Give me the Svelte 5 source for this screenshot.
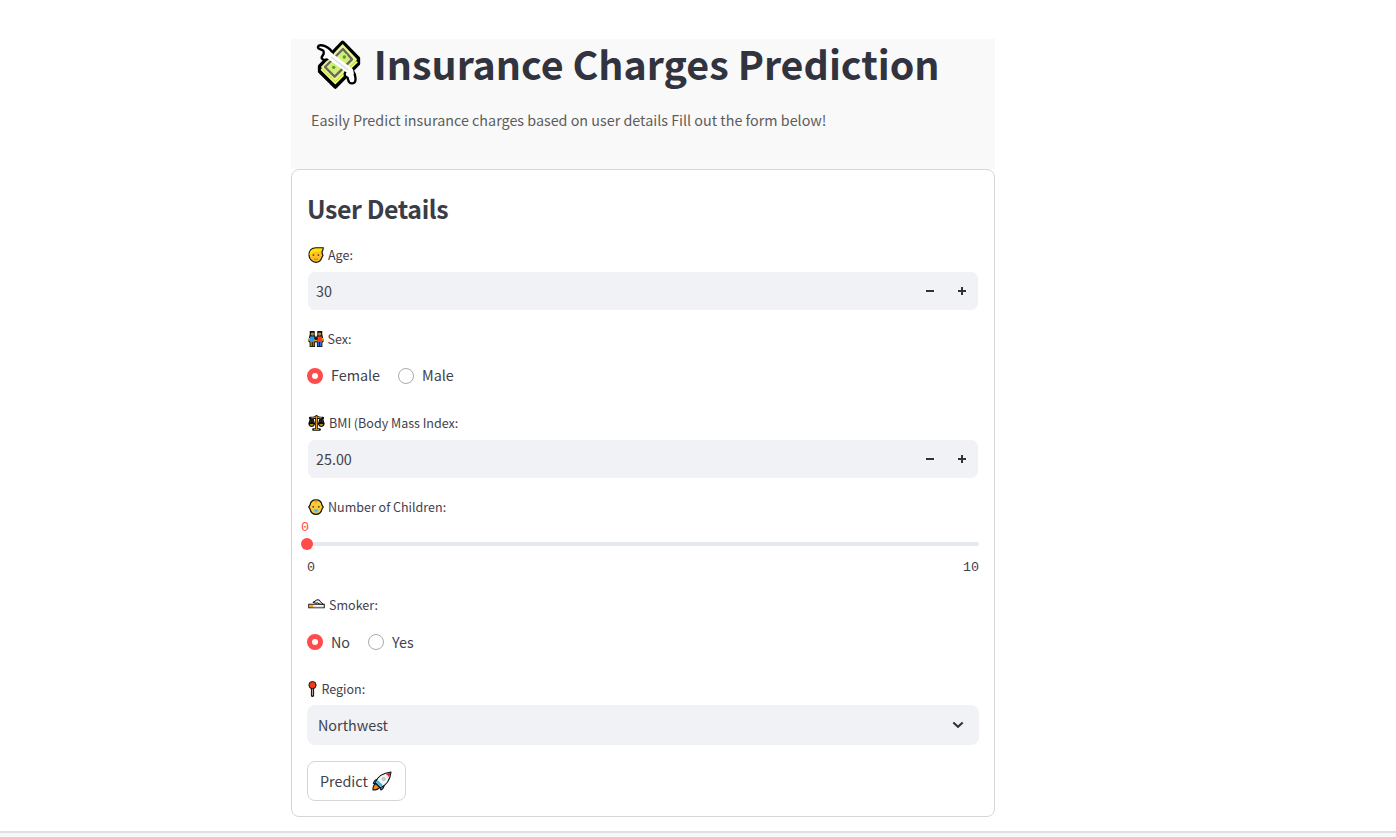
<script>
  let age = $state(30);
  let bmi = $state(25);
  let sex = $state('Female');
  let smoker = $state('No');
</script>

{#snippet stepper(down, up)}
  <button type="button" class="step" aria-label="Decrease" onclick={down}>
    <svg width="8" height="8" viewBox="0 0 8 8"><path d="M0 3h8v2H0z" fill="#31333f" /></svg>
  </button>
  <button type="button" class="step" aria-label="Increase" onclick={up}>
    <svg width="8" height="8" viewBox="0 0 8 8"><path d="M0 3h3V0h2v3h3v2H5v3H3V5H0z" fill="#31333f" /></svg>
  </button>
{/snippet}

{#snippet radios(options, value, pick, kind)}
  <div class="radios {kind}">
    {#each options as option}
      <button type="button" class="radio" onclick={() => pick(option)}>
        <span class="dot" class:on={value === option}></span><span class="text">{option}</span>
      </button>
    {/each}
  </div>
{/snippet}

<main>
  <header>
    <h1>
      <svg width="45" height="50" viewBox="93 30 135 150" stroke-linejoin="round">
        <path d="M173 37 L220 85 V101 L151 171 L104 124 V109 Z" fill="#c3df48" stroke="#000" stroke-width="11" />
        <path d="M173 42 L216 88 L151 153 L108 111 Z" fill="#e9f58d" />
        <path d="M108 118 L151 160 L217 95" fill="none" stroke="#f1ff72" stroke-width="4" />
        <path d="M174 57 L201 88 L149 140 L120 111 Z" fill="#d9ed7c" stroke="#67695f" stroke-width="7" />
        <circle cx="178" cy="81" r="10" fill="#c5f178" /><circle cx="146" cy="112" r="10" fill="#c5f178" />
        <circle cx="178" cy="81" r="5" fill="#5f9a22" /><circle cx="146" cy="112" r="5" fill="#5f9a22" />
        <path d="M144 75 C138 47 101 40 99 50 C97 60 112 56 116 64 C120 75 103 82 113 88 C120 92 129 87 135 83" fill="#fff" stroke="#000" stroke-width="7" />
        <path d="M183 124 C175 133 180 142 187 142 C191 148 187 160 201 160 C217 161 213 134 202 119" fill="#fff" stroke="#000" stroke-width="7" />
        <path d="M122 60 L137 66 L204 118 L207 133 L186 128 L125 84 Z" fill="#fff" />
        <path d="M138 81 L190 120" stroke="#ddd" stroke-width="4" />
      </svg>
      <span>Insurance Charges Prediction</span>
    </h1>
    <p>Easily Predict insurance charges based on user details Fill out the form below!</p>
  </header>

  <form>
    <h2>User Details</h2>

    <section>
      <div class="label">
        <svg width="16" height="16" viewBox="0 0 16 16">
          <path d="M1 8.3 C1 3.3 3.5 .8 8 .8 H15.2 C15.3 2.6 14.6 3.8 14 4.6 L14.4 7.2 15 8.2 14 10.2 C13 13.5 11 15.3 8 15.3 S1 12.5 1 8.3Z" fill="#ffbf28" stroke="#15130c" stroke-width="1.2" />
          <path d="M1.6 8 V6.2 C2.2 3 4.6 1.4 8 1.4 H14.6 C14.2 4 12 4.8 8.5 4.8 C5 4.8 3.2 5.5 3 8Z" fill="#ffe400" />
          <path d="M5.4 7.2v1.8M10.4 7.2v1.8" stroke="#65451a" stroke-width="1.4" /><path d="M5.9 12q2 .7 4 0" fill="none" stroke="#b87716" />
        </svg>
        <span>Age:</span>
      </div>
      <div class="field"><span>{age}</span>{@render stepper(() => age--, () => age++)}</div>
    </section>

    <section>
      <div class="label sex">
        <svg width="16" height="16" viewBox="0 0 16 16">
          <path d="M1.4 4.6h5.6L8 6.5l1-1.9h5.6L15.9 10.2l-1.5 1.4V16H8.9v-4.2L8 11l-.9.8V16H1.6v-4.4L.1 10.2Z" fill="#111" />
          <path d="M1.7 0h5v5h-5ZM9.3 0h5v5h-5Z" fill="#111" />
          <path d="M2.1 5.5h4.2l.4 5.5H2Z" fill="#2a9cf0" /><path d="M9.7 5.5h4.2l.3 5.5H9.3Z" fill="#fa3b20" />
          <path d="M2.4 11h1.7v4.3H2.4ZM4.8 11h1.5v4.3H4.8Z" fill="#a06c1b" /><path d="M9.7 11h1.5v4.3H9.7ZM12 11h1.6v4.3H12Z" fill="#2b70d8" />
          <circle cx="4.4" cy="3.1" r="1.7" fill="#b98230" /><circle cx="11.6" cy="3.1" r="1.7" fill="#b98230" />
          <path d="M1.5 7 1 10M6.2 9.3l3 .3M14.6 7l.4 3" stroke="#eeb42d" stroke-width="1.3" />
        </svg>
        <span>Sex:</span>
      </div>
      {@render radios(['Female', 'Male'], sex, (v) => (sex = v), 'raised')}
    </section>

    <section>
      <div class="label">
        <svg width="17" height="16" viewBox="0 0 17 16">
          <path d="M8.5 1.3v13M2.2 3h3.3l3-1.2 3 1.2h3.3M5.4 14.5h6.2" fill="none" stroke="#090909" stroke-width="2.6" stroke-linecap="round" />
          <path d="M2.3 2h2.8l2 6.8Q6.2 12 3.7 12T.3 8.8ZM11.9 2h2.8l2 6.8Q15.8 12 13.3 12T9.9 8.8Z" fill="#0b0b0b" />
          <path d="M1.8 9.2h3.9Q5.3 10.7 3.7 10.7T1.8 9.2ZM11.3 9.2h3.9Q14.7 10.7 13.3 10.7T11.3 9.2Z" fill="#f7ac16" />
          <path d="M3 4.7 2.3 7.4M4.5 4.7l.7 2.7M12.6 4.7l-.7 2.7M14.1 4.7l.7 2.7" stroke="#555" stroke-width=".5" />
          <path d="M8.5 1.6v12.6M3.2 2.8h2.3l3-1 3 1h2.3M5.9 14.4h5.2" fill="none" stroke="#f7ac16" stroke-width=".9" />
        </svg>
        <span>BMI (Body Mass Index:</span>
      </div>
      <div class="field"><span>{bmi.toFixed(2)}</span>{@render stepper(() => bmi--, () => bmi++)}</div>
    </section>

    <section>
      <div class="label">
        <svg width="16" height="16" viewBox="0 0 16 16">
          <path d="M8 .8 C11.8.8 13.6 3 14 6.2 L15.3 8 14 10 C13.2 13.5 11.3 15.3 8 15.3 S2.8 13.5 2 10L.7 8 2 6.2C2.4 3 4.2.8 8 .8Z" fill="#ffca38" stroke="#15130c" stroke-width="1.2" />
          <path d="M6.6 1.5h2.8v1.8q-1.4.8-2.6-.3Z" fill="#e99b17" /><circle cx="5.2" cy="7.8" r=".9" fill="#513513" /><circle cx="10.8" cy="7.8" r=".9" fill="#513513" />
          <path d="M6 10.4h4v1.8L8 13.7l-2-1.5Z" fill="#54c9f4" stroke="#54c9f4" stroke-width=".6" /><circle cx="8" cy="11.6" r=".7" fill="#239bd3" />
        </svg>
        <span>Number of Children:</span>
      </div>
      <div class="slider">
        <span class="value">0</span>
        <div class="track"><span class="thumb"></span></div>
        <div class="range"><span>0</span><span>10</span></div>
      </div>
    </section>

    <section>
      <div class="label">
        <svg width="17" height="16" viewBox="0 0 17 16">
          <path d="M.8 7.3h15.4v3.5H.8Z" fill="#fff" stroke="#15130c" stroke-width="1.1" />
          <path d="M1.4 7.9h4v2.3h-4Z" fill="#f4a51d" /><path d="M5.4 9.8h10.2" stroke="#ccc" />
          <path d="M8 6.3 5 5.4Q5.4 4.1 7.2 4.4 7.8 2.4 10 2.8 11.7 2.6 12 4.3L15.2 7.2H12L9.3 5.8Z" fill="#eee" stroke="#111" />
        </svg>
        <span>Smoker:</span>
      </div>
      {@render radios(['No', 'Yes'], smoker, (v) => (smoker = v), '')}
    </section>

    <section>
      <div class="label region">
        <svg width="9" height="16" viewBox="0 0 9 16">
          <path d="M4.5 6v8.4" stroke="#15130c" stroke-width="3.2" stroke-linecap="round" /><path d="M4.5 6v8.5" stroke="#aaa" stroke-width="1.1" />
          <circle cx="4.5" cy="4.1" r="3.6" fill="#f43a16" stroke="#15130c" />
        </svg>
        <span>Region:</span>
      </div>
      <div class="select">
        <span>Northwest</span>
        <svg width="12" height="8" viewBox="0 0 12 8"><path d="m1.3 1.4 4.7 4.4 4.7-4.4" fill="none" stroke="#31333f" stroke-width="2.1" /></svg>
      </div>
    </section>

    <button type="button" class="predict">
      <span>Predict</span>
      <svg width="20" height="20" viewBox="0 0 60 60" stroke="#111" stroke-width="3.4" stroke-linejoin="round">
        <path d="M19 24 Q8 25 4 37 L14 39ZM36 42 Q36 52 27 57 L23 47Z" fill="#3cb7e8" />
        <path d="M11 38 Q2 43 3 57 Q17 57 23 49Z" fill="#f58a19" />
        <path d="M10 35 Q20 7 57 3 Q53 39 25 50Z" fill="#f4f7fa" />
        <path d="M40 8 55 5 52 20 Q49 12 40 8Z" fill="#e9202b" stroke="none" />
        <path d="M13 35 17 27 33 43 25 47Z" fill="#3cb7e8" stroke="none" />
        <circle cx="35" cy="24" r="5" fill="#ccd5dc" stroke="#a5b0b8" stroke-width="2" />
      </svg>
    </button>
  </form>
</main>
<footer></footer>

<style>
  :global(body) { margin: 0; background: #fff; overflow: hidden; }
  :global(#app) { font-family: "Noto Sans CJK SC", "Open Sans", sans-serif; color: #3f414c; }
  main { box-sizing: border-box; width: 704px; height: 831px; margin-left: 291px; padding-top: 39px; }
  header { box-sizing: border-box; height: 130px; background: #f9f9f9; padding: 1px 20px 0; }
  h1 { margin: 0; display: flex; height: 52px; padding-left: 5px; gap: 12.8px; font-size: 39.4px; line-height: 46px; font-weight: 700; color: #31333f; white-space: nowrap; }
  h1 svg { flex: none; }
  header p { margin: 16px 0 0; font-size: 14.33px; line-height: 24px; color: #5c5c5c; white-space: nowrap; }
  form { box-sizing: border-box; height: 648px; border: 1px solid #d6d6d9; border-radius: 8px; padding: 15px; display: flex; flex-direction: column; gap: 16px; }
  h2 { margin: 0; height: 42px; line-height: 46px; font-size: 24.9px; letter-spacing: -0.4px; font-weight: 600; color: #3a3c48; white-space: nowrap; }
  section { display: flex; flex-direction: column; gap: 4px; }
  .label { display: flex; align-items: center; height: 24px; padding-left: 1px; gap: 4px; font-size: 12.53px; line-height: 24px; white-space: nowrap; }
  .label.sex { gap: 3.5px; }
  .label.region { gap: 4.4px; }
  .label svg { flex: none; }
  .field, .select { box-sizing: border-box; height: 40px; display: flex; align-items: center; background: #f0f2f6; border-radius: 8px; font-size: 14.35px; line-height: 24px; }
  .field { border: 1px solid #fff; padding-left: 8px; }
  .field span { flex: 1; }
  button { font: inherit; color: inherit; background: none; border: 0; padding: 0; }
  .step { width: 32px; height: 38px; display: flex; align-items: center; justify-content: center; }
  .radios { box-sizing: border-box; height: 40px; padding-top: 2px; display: flex; align-items: center; gap: 18px; }
  .radio { display: flex; align-items: center; gap: 8px; font-size: 14.35px; line-height: 22px; }
  .raised .text { padding-bottom: 2px; }
  .dot { box-sizing: border-box; width: 16px; height: 16px; border-radius: 50%; border: 1px solid #aaaab0; background: #fff; }
  .dot.on { border: 5px solid #ff4b4b; }
  .slider { height: 54px; display: flex; flex-direction: column; font: 13.4px/16px "Liberation Mono", monospace; }
  .value { color: #ff4b4b; margin-left: -6px; height: 18px; margin-top: -3px; }
  .track { height: 4px; margin-top: 4px; border-radius: 2px; background: #e4e8ef; display: flex; align-items: center; }
  .thumb { width: 12px; height: 12px; margin-left: -6px; border-radius: 50%; background: #ff4b4b; flex: none; }
  .range { display: flex; justify-content: space-between; margin-top: 14px; }
  .select { justify-content: space-between; padding: 0 15px 0 11px; }
  .predict { box-sizing: border-box; width: 99px; height: 40px; border: 1px solid #d6d6d9; border-radius: 8px; display: flex; align-items: center; gap: 4px; padding-left: 12px; font-size: 14.35px; }
  .predict span { padding-bottom: 2px; }
  footer { box-sizing: border-box; height: 6px; border-top: 2px solid #e0e0e0; background: #f7f7f7; }
</style>
